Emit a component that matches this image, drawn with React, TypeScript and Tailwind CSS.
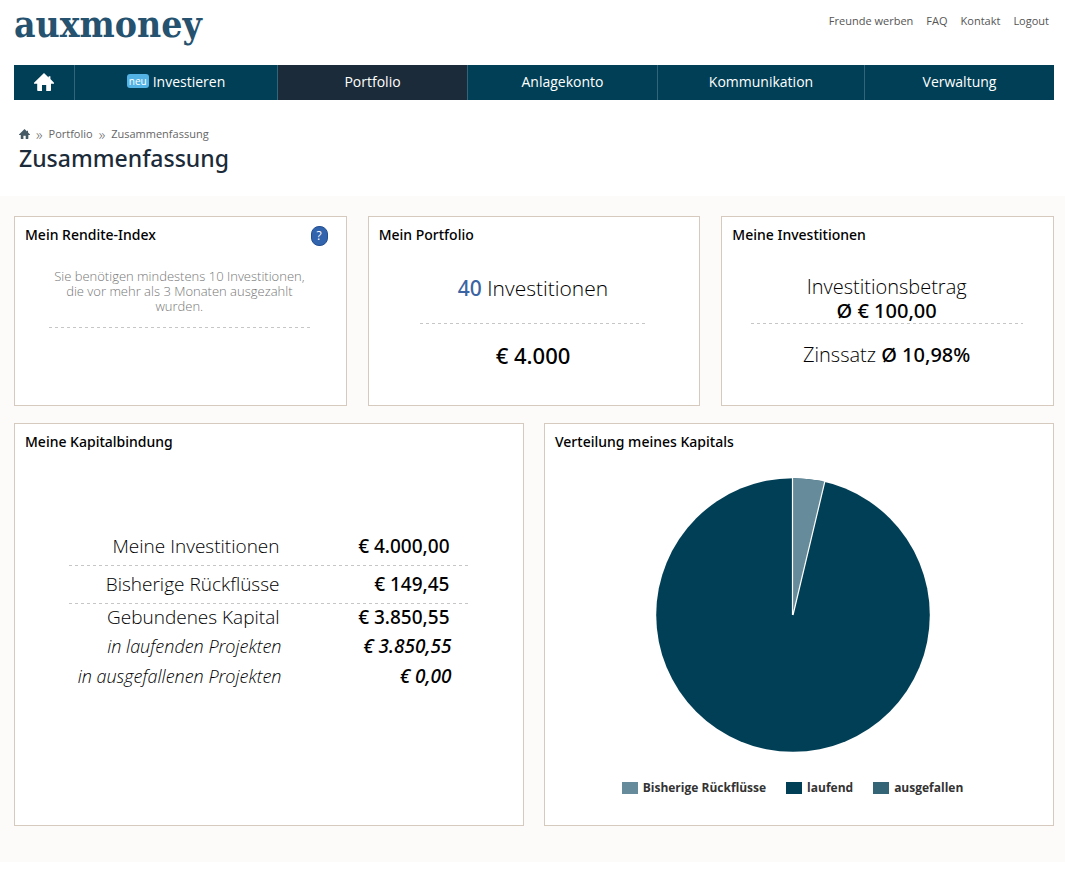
import type { ReactNode } from "react";

const dash =
  "bg-[repeating-linear-gradient(90deg,#c6c6c6_0_3px,transparent_3px_6px)]";

const strong = "font-['Noto_Sans',sans-serif] font-medium";

const topLinks = ["Freunde werben", "FAQ", "Kontakt", "Logout"];

const navItems = [
  { label: "Investieren", isNew: true },
  { label: "Portfolio", active: true },
  { label: "Anlagekonto" },
  { label: "Kommunikation" },
  { label: "Verwaltung" },
];

const capitalRows = [
  { label: "Meine Investitionen", value: "€ 4.000,00", height: "h-[39px]", line: true },
  { label: "Bisherige Rückflüsse", value: "€ 149,45", height: "h-[38px]", line: true },
  { label: "Gebundenes Kapital", value: "€ 3.850,55", height: "h-[28px]" },
  { label: "in laufenden Projekten", value: "€ 3.850,55", height: "h-[30px]", sub: true },
  { label: "in ausgefallenen Projekten", value: "€ 0,00", height: "h-[30px]", sub: true },
];

const legend = [
  { label: "Bisherige Rückflüsse", color: "bg-[#668b9a]" },
  { label: "laufend", color: "bg-[#003f55]" },
  { label: "ausgefallen", color: "bg-[#336577]" },
];

function HomeIcon({ className }: { className: string }) {
  return (
    <svg viewBox="0 0 20 18" className={className} fill="currentColor" aria-hidden="true">
      <path d="M10 0 L14.6 4.4 V3.2 H16.400 V6.100 L20 9.800 V10.800 H17 V17.200 Q17 18 16.200 18 H12.200 V12 H8 V18 H4 Q3.200 18 3.200 17.200 V10.800 H0 V9.800 Z" />
    </svg>
  );
}

function Card({ title, className = "", children }: { title: string; className?: string; children: ReactNode }) {
  return (
    <section className={`relative border border-[#d6c9be] bg-white pt-2 pr-3 pl-[10px] ${className}`}>
      <h2 className={`text-left text-[14px] leading-5 ${strong}`}>{title}</h2>
      {children}
    </section>
  );
}

export default function App() {
  return (
    <div className="bg-white font-['Open_Sans','Noto_Sans',sans-serif] text-black">
      <header className="pr-[11px] pl-[14px]">
        <div className="flex h-[65px] items-start justify-between">
          <a
            href="#"
            className="pt-1 font-['DejaVu_Serif_Condensed','DejaVu_Serif',serif] text-[37px] leading-10 font-bold text-[#25526f]"
          >
            auxmoney
          </a>
          <ul className="flex gap-[13px] pt-[13px] pr-[5px] text-[11px] leading-4 text-[#555]">
            {topLinks.map((l) => (
              <li key={l}>
                <a href="#">{l}</a>
              </li>
            ))}
          </ul>
        </div>
        <nav className="grid h-[35px] grid-cols-[61px_203fr_190fr_190fr_207fr_189fr] bg-[#003f55] text-[14px] text-white">
          <a href="#" aria-label="Startseite" className="flex items-center justify-center border-r border-[#33657a] pb-px">
            <HomeIcon className="h-[18px] w-5" />
          </a>
          {navItems.map((n) => (
            <a
              key={n.label}
              href="#"
              className={`flex items-center justify-center gap-1 border-r border-[#33657a] pb-[3px] last:border-r-0 ${n.active ? "bg-[#1c2b39]" : ""}`}
            >
              {n.isNew && (
                <span className="rounded-[3px] bg-[#53b3e4] px-[2px] text-[10px] leading-[14px]">neu</span>
              )}
              {n.label}
            </a>
          ))}
        </nav>
        <div className="h-24 pt-[26px] pl-[5px]">
          <nav className="flex items-center gap-[6px] text-[11px] leading-4 text-[#666]" aria-label="Brotkrumen">
            <a href="#" aria-label="Startseite" className="text-[#465a65]">
              <HomeIcon className="h-[10px] w-[11px]" />
            </a>
            <span className="text-[15px] font-light">»</span>
            <a href="#">Portfolio</a>
            <span className="text-[15px] font-light">»</span>
            <span>Zusammenfassung</span>
          </nav>
          <h1 className={`text-[23px] leading-8 text-[#1c2b39] ${strong}`}>Zusammenfassung</h1>
        </div>
      </header>

      <main className="bg-[#fcfbf9] pt-5 pr-[11px] pb-9 pl-[14px]">
        <div className="grid grid-cols-3 gap-[21px]">
          <Card title="Mein Rendite-Index" className="min-h-[190px]">
            <button
              type="button"
              aria-label="Hilfe"
              className="absolute top-[9px] right-[18px] h-5 w-[17px] rounded-[8px] border border-[#244f91] bg-[#3263ad] text-[12px] leading-[18px] text-white"
            >
              ?
            </button>
            <div className="mx-auto mt-6 w-[261px] text-center text-[13px] leading-[15px] font-light text-[#777]">
              <p>Sie benötigen mindestens 10 Investitionen, die vor mehr als 3 Monaten ausgezahlt wurden.</p>
              <div className={`mt-[13px] h-px ${dash}`} />
            </div>
          </Card>
          <Card title="Mein Portfolio" className="min-h-[190px] text-center">
            <p className="mt-[31px] text-[21px] leading-6 font-light">
              <a href="#" className={`text-[#3c64a3] ${strong}`}>40</a> Investitionen
            </p>
            <div className={`mx-auto mt-[23px] h-px w-[226px] ${dash}`} />
            <p className={`mt-[19px] text-[22px] leading-6 ${strong}`}>€ 4.000</p>
          </Card>
          <Card title="Meine Investitionen" className="min-h-[190px] text-center">
            <p className="mt-[30px] text-[20px] leading-6 font-light">Investitionsbetrag</p>
            <p className={`text-[20px] leading-6 ${strong}`}>Ø € 100,00</p>
            <div className={`mx-auto h-px w-[272px] ${dash}`} />
            <p className="mt-[19px] text-[20px] leading-6 font-light">
              Zinssatz <span className={strong}>Ø 10,98%</span>
            </p>
          </Card>
        </div>

        <div className="mt-[17px] grid grid-cols-2 gap-5">
          <Card title="Meine Kapitalbindung">
            <table className="mx-auto mt-[75px] w-[399px] text-right leading-6">
              <tbody>
                {capitalRows.map((r) => (
                  <tr
                    key={r.label}
                    className={`${r.height} ${r.sub ? "italic" : ""} ${r.line ? `${dash} bg-[length:100%_1px] bg-bottom bg-no-repeat` : ""}`}
                  >
                    <th
                      scope="row"
                      className={`w-[213px] p-0 pb-[2px] text-right font-light ${r.sub ? "text-[18px]" : "pr-[2px] text-[19px]"}`}
                    >
                      {r.label}
                    </th>
                    <td className={`pt-0 pb-[2px] pl-0 text-[19px] ${strong} ${r.sub ? "pr-4" : "pr-[18px]"}`}>{r.value}</td>
                  </tr>
                ))}
              </tbody>
            </table>
          </Card>
          <Card title="Verteilung meines Kapitals" className="pb-[29px]">
            <div className="mt-[26px] flex flex-col items-center pr-[11px]">
              <svg viewBox="0 0 274 274" className="size-[274px]" role="img" aria-label="Kreisdiagramm">
                <circle cx="137" cy="137" r="136.800" fill="#003f55" />
                <path d="M137 137 V0.200 A136.800 136.800 0 0 1 168.800 3.900 Z" fill="#668b9a" />
                <path d="M136.500 0 V137 M137 137 L168.800 3.700" fill="none" stroke="#fff" strokeWidth="1.200" />
              </svg>
              <ul className="mt-7 flex gap-5 text-[12px] leading-4 font-bold text-[#333]">
                {legend.map((l) => (
                  <li key={l.label} className="flex items-center gap-[5px]">
                    <span className={`h-3 w-4 ${l.color}`} />
                    {l.label}
                  </li>
                ))}
              </ul>
            </div>
          </Card>
        </div>
      </main>
    </div>
  );
}
